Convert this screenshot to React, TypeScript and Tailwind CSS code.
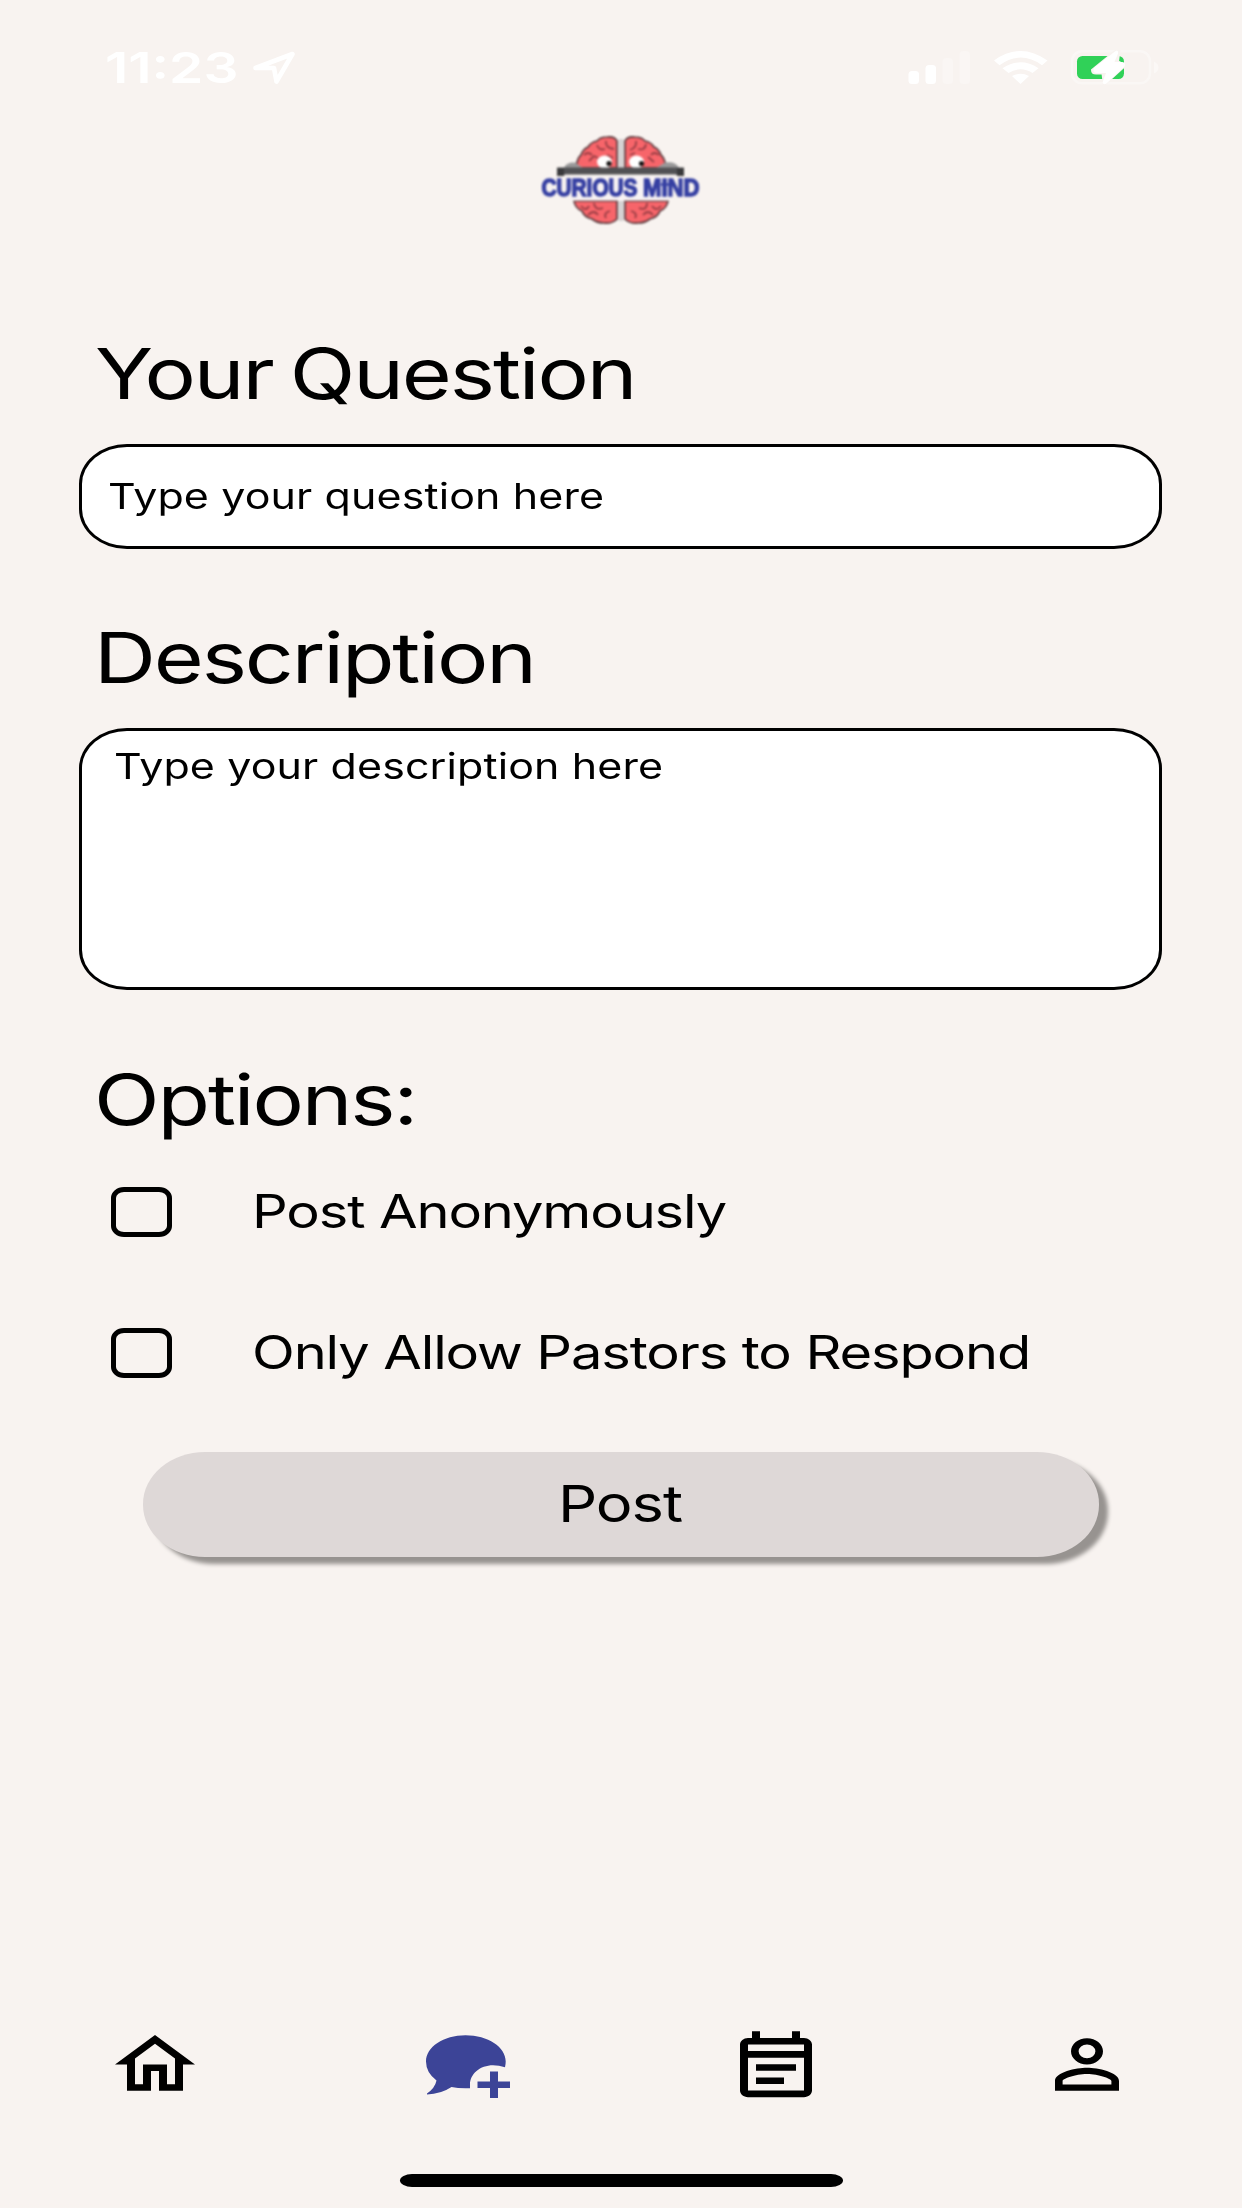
import React from "react";
import { MdOutlineEventNote, MdOutlineHome, MdPersonOutline } from "react-icons/md";

function StatusBar() {
  return (
    <header className="flex h-[134px] items-start justify-between pl-[105px] pr-[83px] text-white">
      <div className="flex pt-[46px]">
        <span className="block h-[43px] w-[147px] origin-left scale-x-[1.28] whitespace-nowrap text-[43px] font-semibold leading-[43px]">11:23</span>
        <svg className="mt-[4px] h-[36px] w-[46px]" viewBox="0 0 46 36" fill="none" stroke="#fff" strokeWidth="4.6" strokeLinejoin="round">
          <path d="M3.500 18L40.500 4L24.500 31.500L22 18Z" />
        </svg>
      </div>
      <div className="flex pt-[50px]">
        <svg className="h-[35px] w-[251px]" viewBox="908 50 251 35">
          <g fill="#fff">
            <rect x="908.500" y="71" width="10.500" height="13" rx="3.5" />
            <rect x="925.500" y="65" width="10.500" height="19" rx="3.5" />
            <rect x="942.500" y="58" width="10.500" height="26" rx="3.5" opacity=".25" />
            <rect x="959.500" y="51" width="10.500" height="33" rx="3.5" opacity=".25" />
            <path d="M994 60.5Q1020.500 41.500 1047.500 60.500L1042 65.200Q1020.500 50 999.500 65.200Z" />
            <path d="M1002.500 68.200Q1020.500 56.500 1038.500 68.200L1032.500 73Q1020.500 65.500 1008.500 73Z" />
            <path d="M1012 76Q1020.500 71.500 1029 76L1020.500 84Z" />
          </g>
          <rect x="1072" y="51.300" width="78" height="32" rx="10" fill="none" stroke="#fff" strokeOpacity=".35" strokeWidth="2.500" />
          <path d="M1154 61.500Q1158.500 63.500 1158.500 67.500T1154 73.500Z" fill="#fff" opacity=".4" />
          <rect x="1077" y="56" width="47" height="23" rx="5.500" fill="#30d158" />
          <path d="M1116.500 50L1092 70Q1092 73.500 1096 73.500H1102.500L1104 85L1125.500 65.500L1118 61.500L1119.500 50Z" fill="#f8f3f0" stroke="#f8f3f0" strokeWidth="2" />
          <path d="M1115.500 51L1094 68Q1092 73 1096.500 73H1106L1102.500 82.500Q1103.500 85.500 1106.500 83.500L1124.500 66.500Q1126 62.500 1122 62H1114.500L1118 53.500Q1118.500 49.500 1115.500 51Z" fill="#fff" />
        </svg>
      </div>
    </header>
  );
}

function Logo() {
  return (
    <svg className="ml-[540px] block h-[94px] w-[162px]" viewBox="540 134 162 94">
      <g style={{ filter: "blur(0.8px)" }}>
        <g fill="#f7656a" stroke="#5b3a3e" strokeWidth="1.700">
          <path d="M617 168V141Q615 136 607 137Q600 137 597 141Q591 142 588 147Q583 149 581 155Q577 158 576 168Z" />
          <path d="M625 168V141Q627 136 635 137Q642 137 645 141Q651 142 654 147Q659 149 661 155Q665 158 666 168Z" />
          <path d="M617 201V219Q612 224 604 223Q597 223 592 219Q584 217 582 211Q575 208 574 201Z" />
          <path d="M625 201V219Q630 224 638 223Q645 223 650 219Q658 217 660 211Q667 208 668 201Z" />
        </g>
        <path d="M621 139V168M621 201V221" stroke="#d3d0d1" strokeWidth="5" />
        <path d="M584 155q4-4 8 0M597 145q2 6 8 4M606 141q-1 7 8 8M589 161l5-5 4 2M607 155l6 3M636 141q1 7-6 9M646 144q-1 7-8 5M659 155q-5-4-8 0M654 162l-6-5M630 155l5-2M581 206q5 6 8 0M594 203q1 8 9 5M588 215q6-6 10 0M606 218q-3-5 4-7M661 206q-5 6-9 0M647 203q0 8-8 5M653 215q-5-6-10 0M635 218q3-5-4-7" fill="none" stroke="#963d44" strokeWidth="1.800" />
        <ellipse cx="604.500" cy="162" rx="7.500" ry="6.500" fill="#fff" />
        <ellipse cx="636.500" cy="162" rx="7.500" ry="6.500" fill="#fff" />
        <circle cx="609" cy="163.500" r="2.600" fill="#151313" />
        <circle cx="641.500" cy="163.500" r="2.600" fill="#151313" />
        <path d="M564 168Q566 162 575 162.500L583 168ZM679 168Q676 161 665 162.500L656 168Z" fill="#999899" />
        <path d="M557 167.500H684V176L675 174.500H566L557 176Z" fill="#515154" />
        <path d="M557 168H564V176H557ZM677 168H684V176H677Z" fill="#39393b" />
        <rect x="573" y="176" width="96" height="24.500" fill="#f8f3f3" />
        <text x="541.500" y="196" textLength="96" lengthAdjust="spacingAndGlyphs" className="font-['Liberation_Sans'] text-[23px] font-bold" fill="#353fa2" stroke="#353fa2" strokeWidth="1.400">CURIOUS</text>
        <text x="643" y="196" textLength="56.500" lengthAdjust="spacingAndGlyphs" className="font-['Liberation_Sans'] text-[23px] font-bold" fill="#353fa2" stroke="#353fa2" strokeWidth="1.400">MIND</text>
        <path d="M661 184.500H670.500" stroke="#353fa2" strokeWidth="2.400" />
      </g>
    </svg>
  );
}

const heading = "h-[70px] origin-left scale-x-[1.217] whitespace-nowrap text-[70.5px] font-normal leading-[72px] tracking-[-1.75px] [word-spacing:-4px]";
const placeholder = "origin-left scale-x-[1.217] whitespace-nowrap text-[35.3px] leading-[36px] tracking-[0.1px]";
const field = "mr-[1px] rounded-[48px/40px] border-[3px] border-black bg-white";
const optionText = "ml-[80px] mt-[-2px] origin-left scale-x-[1.217] whitespace-nowrap text-[46px] leading-[46px] tracking-[-0.93px]";

function Checkbox() {
  return <span className="h-[50px] w-[61px] shrink-0 rounded-[13px/11px] border-[5px] border-black" />;
}

export default function App() {
  return (
    <div className="flex h-[2208px] w-[1242px] flex-col overflow-hidden bg-[#f8f3f0] font-['Inter',sans-serif] text-black">
      <StatusBar />
      <Logo />
      <main className="flex flex-col px-[79px]">
        <h2 className={`ml-[16px] mt-[110px] ${heading}`}>Your Question</h2>
        <div className={`mt-[36px] h-[105px] pl-[26px] pt-[32px] ${field}`}>
          <p className={placeholder}>Type your question here</p>
        </div>
        <h2 className={`ml-[15px] mt-[73px] ${heading}`}>Description</h2>
        <div className={`mt-[36px] h-[262px] pl-[32px] pt-[18px] ${field}`}>
          <p className={placeholder}>Type your description here</p>
        </div>
        <h2 className={`ml-[15px] mt-[74px] ${heading}`}>Options:</h2>
        <label className="ml-[32px] mt-[53px] flex h-[50px] items-center">
          <Checkbox />
          <span className={optionText}>Post Anonymously</span>
        </label>
        <label className="ml-[32px] mt-[91px] flex h-[50px] items-center">
          <Checkbox />
          <span className={optionText}>Only Allow Pastors to Respond</span>
        </label>
        <button className="ml-[64px] mt-[74px] flex h-[105px] w-[956px] items-center justify-center rounded-[62px/52px] bg-[#ded8d7] shadow-[9px_7px_4px_#979390]">
          <span className="-mt-[2px] mr-[2px] scale-x-[1.217] text-[50.5px] leading-[50px] tracking-[-0.9px]">Post</span>
        </button>
      </main>
      <nav className="mt-[468px] flex h-[79px] items-start pl-[107px]">
        <MdOutlineHome className="h-[79px] w-[96px]" preserveAspectRatio="none" />
        <svg className="ml-[222px] mt-[9px] h-[64px] w-[86px] text-[#3c4497]" viewBox="425 2034 86 64" fill="currentColor">
          <path d="M465.500 2035.300C488 2035.300 505.700 2047 505.700 2061.500Q505.700 2064.500 505 2067.200Q499 2065.200 493 2065.200C480 2065.200 470 2074 470 2084.500V2088.200Q459 2088.600 451.500 2087Q441 2094 427 2094.500V2093.500Q435 2088 436.500 2080.500Q426 2072.500 426 2061.500C426 2047 443.500 2035.300 465.500 2035.300Z" />
          <path d="M490 2071.500H498V2081.500H510V2088H498V2098H490V2088H477.500V2081.500H490Z" />
        </svg>
        <MdOutlineEventNote className="ml-[217px] mt-[3px] h-[79px] w-[96px]" preserveAspectRatio="none" />
        <MdPersonOutline className="ml-[215px] h-[79px] w-[96px]" preserveAspectRatio="none" />
      </nav>
      <div className="ml-[400px] mt-[70px] h-[13px] w-[443px] rounded-[12px/6.5px] bg-black" />
    </div>
  );
}
